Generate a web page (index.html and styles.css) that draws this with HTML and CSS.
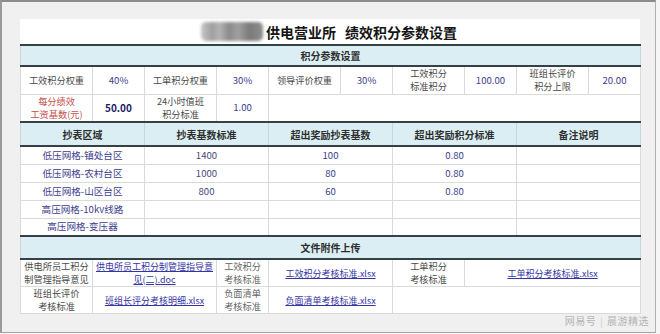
FILE: index.html
```html
<!DOCTYPE html>
<html lang="zh">
<head>
<meta charset="utf-8">
<title>绩效积分参数设置</title>
<link rel="stylesheet" href="styles.css">
</head>
<body>
<div class="frame">
  <div class="panel">
    <div class="title"><span class="blur"></span><span>供电营业所</span><span class="title-b">绩效积分参数设置</span></div>
    <table class="sheet">
      <colgroup>
        <col class="c-l"><col class="c-v"><col class="c-l"><col class="c-v"><col class="c-l"><col class="c-v"><col class="c-l"><col class="c-v"><col class="c-l"><col class="c-v">
      </colgroup>
      <tbody class="s1">
        <tr class="sec-head h1"><td colspan="10">积分参数设置</td></tr>
        <tr class="r28">
          <td>工效积分权重</td><td class="val">40%</td>
          <td>工单积分权重</td><td class="val">30%</td>
          <td>领导评价权重</td><td class="val">30%</td>
          <td>工效积分<br>标准积分</td><td class="val">100.00</td>
          <td>班组长评价<br>积分上限</td><td class="val">20.00</td>
        </tr>
        <tr class="r28">
          <td class="red">每分绩效<br>工资基数(元)</td><td class="val strong">50.00</td>
          <td>24小时值班<br>积分标准</td><td class="val">1.00</td>
          <td colspan="6"></td>
        </tr>
      </tbody>
      <tbody class="s2">
        <tr class="sec-head h2">
          <td colspan="2">抄表区域</td><td colspan="2">抄表基数标准</td><td colspan="2">超出奖励抄表基数</td><td colspan="2">超出奖励积分标准</td><td colspan="2">备注说明</td>
        </tr>
        <tr class="r18"><td colspan="2" class="val">低压网格-镇处台区</td><td colspan="2" class="num">1400</td><td colspan="2" class="val">100</td><td colspan="2" class="val">0.80</td><td colspan="2"></td></tr>
        <tr class="r18"><td colspan="2" class="val">低压网格-农村台区</td><td colspan="2" class="num">1000</td><td colspan="2" class="val">80</td><td colspan="2" class="val">0.80</td><td colspan="2"></td></tr>
        <tr class="r18"><td colspan="2" class="val">低压网格-山区台区</td><td colspan="2" class="num">800</td><td colspan="2" class="val">60</td><td colspan="2" class="val">0.80</td><td colspan="2"></td></tr>
        <tr class="r18"><td colspan="2" class="val">高压网格-10kv线路</td><td colspan="2"></td><td colspan="2"></td><td colspan="2"></td><td colspan="2"></td></tr>
        <tr class="r18"><td colspan="2" class="val">高压网格-变压器</td><td colspan="2"></td><td colspan="2"></td><td colspan="2"></td><td colspan="2"></td></tr>
      </tbody>
      <tbody class="s3">
        <tr class="sec-head h3"><td colspan="10">文件附件上传</td></tr>
        <tr class="r27">
          <td>供电所员工积分<br>制管理指导意见</td>
          <td colspan="2"><a href="#">供电所员工积分制管理指导意<br>见(二).doc</a></td>
          <td class="muted">工效积分<br>考核标准</td>
          <td colspan="2"><a href="#">工效积分考核标准.xlsx</a></td>
          <td>工单积分<br>考核标准</td>
          <td colspan="3"><a href="#">工单积分考核标准.xlsx</a></td>
        </tr>
        <tr class="r26">
          <td>班组长评价<br>考核标准</td>
          <td colspan="2"><a href="#">班组长评分考核明细.xlsx</a></td>
          <td class="muted">负面清单<br>考核标准</td>
          <td colspan="2"><a href="#">负面清单考核标准.xlsx</a></td>
          <td colspan="4"></td>
        </tr>
      </tbody>
    </table>
  </div>
  <div class="mark">网易号 <span class="bar">|</span> 晨游精选</div>
</div>
</body>
</html>
```

FILE: styles.css
```css
* { box-sizing: border-box; }
html, body { margin: 0; padding: 0; }
body {
  background: #f6f6f6;
  font-family: "Noto Sans CJK SC", "Noto Sans", sans-serif;
  width: 660px;
  height: 334px;
  overflow: hidden;
}
.frame {
  position: relative;
  width: 656px;
  height: 333px;
  border-top: 2px solid #8c8c8c;
  border-left: 2px solid #9a9a9a;
  border-right: 1px solid #b0b0b0;
  border-bottom: 1px solid #a4a4a4;
  background: #f0f0f0;
  padding: 17px 0 0 18px;
}
.panel {
  width: 620px;
  background: #fff;
}
.title {
  height: 25px;
  display: flex;
  align-items: center;
  justify-content: center;
  font-size: 14px;
  font-weight: bold;
  color: #151515;
  padding-right: 2px;
}
.title-b { margin-left: 9px; }
.blur {
  width: 62px;
  height: 19px;
  margin-right: 3px;
  border-radius: 5px;
  background: linear-gradient(90deg, #c8c8c8 0%, #9e9e9e 18%, #b4b4b4 30%, #8a8a8a 45%, #a0a0a0 60%, #7a7a7a 78%, #8e8e8e 100%);
  filter: blur(1.5px);
}
.sheet {
  width: 620px;
  border-collapse: collapse;
  table-layout: fixed;
}
.c-l { width: 72px; }
.c-v { width: 52px; }
.sheet td {
  border: 1px solid #dadada;
  text-align: center;
  vertical-align: middle;
  font-size: 9.2px;
  line-height: 13px;
  color: #4a4a4a;
  padding: 0 1px;
  white-space: nowrap;
  overflow: hidden;
}
.sheet .sec-head td {
  background: #dbeef4;
  border-top: 2px solid #364146;
  border-bottom: 2px solid #364146;
  border-left-color: #c9d6da;
  border-right-color: #c9d6da;
  font-weight: bold;
  font-size: 10px;
  color: #2e2e2e;
}
.h1 td { height: 21px; }
.h2 td { height: 24px; }
.h3 td { height: 23px; }
.r28 td { height: 28px; }
.r18 td { height: 18px; }
.r27 td { height: 27px; }
.r26 td { height: 27px; }
.sheet td.val { color: #3e3e8e; font-size: 9.6px; }
.sheet td.num { color: #4a4a78; font-size: 9.6px; }
.sheet td.strong { color: #1c1c66; font-weight: bold; font-size: 10px; }
.sheet td.red { color: #c4504a; }
.sheet td.muted { color: #666; }
.sheet a {
  color: #3434a4;
  text-decoration: underline;
  font-size: 9px;
}
.mark {
  position: absolute;
  right: 6px;
  bottom: 4px;
  font-size: 10px;
  color: #b4b4b4;
  letter-spacing: 0.5px;
}
.mark .bar { color: #cfcfcf; margin: 0 1px; }
```
